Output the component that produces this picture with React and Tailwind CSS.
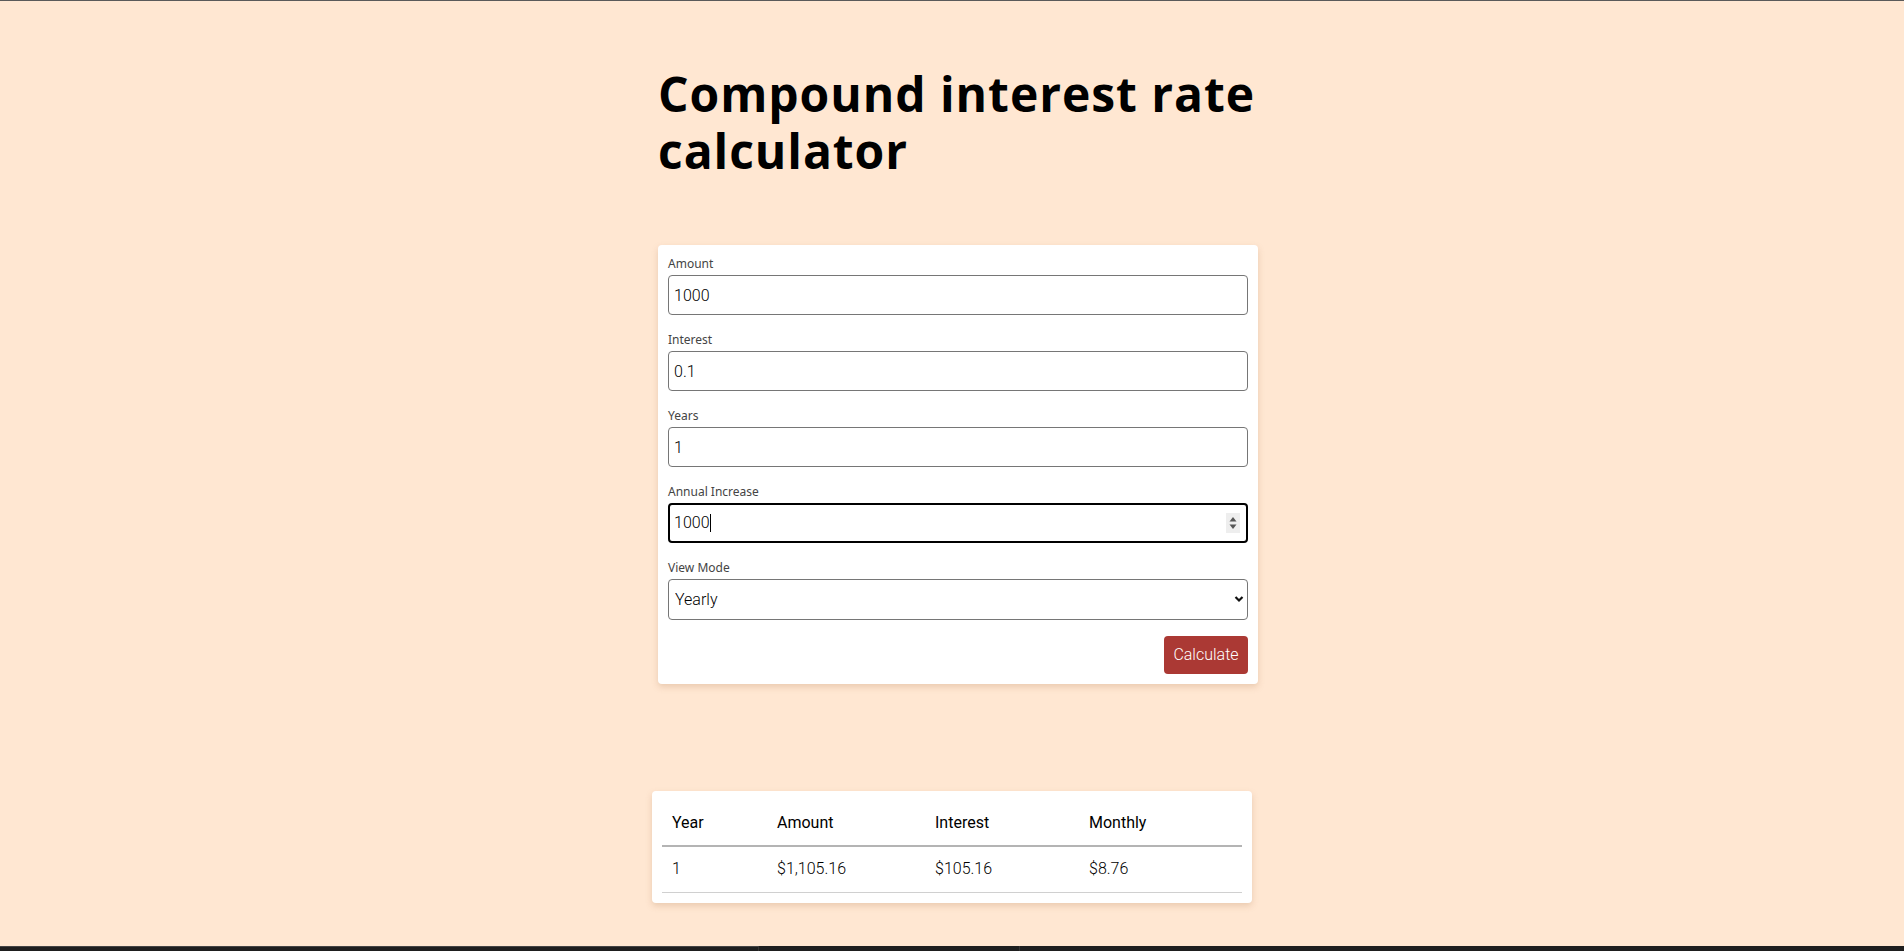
import React, { useState } from 'react';

const fieldLabel = 'block text-[12px] leading-[16px] mb-[3px] text-[#444] font-["Noto_Sans",sans-serif]';
const inputBox =
  'block w-full h-[40px] rounded-[4px] border border-[#767676] bg-white px-[5px] text-[16px] text-black font-["Roboto",sans-serif] font-light outline-none';

const Field = ({ label, children }) => (
  <div className="mb-[17px]">
    <label className={fieldLabel}>{label}</label>
    {children}
  </div>
);

const App = () => {
  const [amount, setAmount] = useState('1000');
  const [interest, setInterest] = useState('0.1');
  const [years, setYears] = useState('1');
  const [mode, setMode] = useState('Yearly');

  // Result of the last calculation
  const rows = [{ year: 1, amount: '$1,105.16', interest: '$105.16', monthly: '$8.76' }];

  return (
    <div className="h-[951px] flex flex-col bg-[#ffe7d2] border-t border-[#5a5a5a] overflow-hidden">
      <div className="flex-1 flex flex-col items-center">
        <div className="w-[600px] ml-[12px] pt-[64px]">
          <h1 className='text-[48px] leading-[57px] font-bold text-black font-["Open_Sans",sans-serif] tracking-[0.95px] whitespace-nowrap'>
            Compound interest rate
            <br />
            calculator
          </h1>

          <form
            className="mt-[66px] bg-white rounded-[4px] shadow-[0_3px_6px_rgba(170,120,80,0.25)] px-[10px] pt-[11px] pb-[10px]"
            onSubmit={(e) => e.preventDefault()}
          >
            <Field label="Amount">
              <input className={inputBox} type="number" value={amount} onChange={(e) => setAmount(e.target.value)} />
            </Field>
            <Field label="Interest">
              <input className={inputBox} type="number" value={interest} onChange={(e) => setInterest(e.target.value)} />
            </Field>
            <Field label="Years">
              <input className={inputBox} type="number" value={years} onChange={(e) => setYears(e.target.value)} />
            </Field>
            <Field label="Annual Increase">
              <div className='flex items-center w-full h-[40px] rounded-[4px] border-2 border-black bg-white pl-[4px] pr-[6px] text-[16px] text-black font-["Roboto",sans-serif] font-light'>
                <span>1000</span>
                <span className="w-px h-[18px] bg-black" />
                <span className="ml-auto flex flex-col items-center justify-center w-[14px] h-[20px] bg-[#eeeeee]">
                  <svg width="8" height="14" viewBox="0 0 8 14">
                    <path d="M4 1 L7.5 5.5 H0.5 Z" fill="#555" />
                    <path d="M4 13 L7.5 8.5 H0.5 Z" fill="#555" />
                  </svg>
                </span>
              </div>
            </Field>
            <div>
              <label className={fieldLabel}>View Mode</label>
              <div className="relative">
                <select
                  className={inputBox + ' h-[41px] appearance-none pl-[6px]'}
                  value={mode}
                  onChange={(e) => setMode(e.target.value)}
                >
                  <option>Yearly</option>
                  <option>Monthly</option>
                </select>
                <svg className="absolute right-[4px] top-[16px] pointer-events-none" width="10" height="8" viewBox="0 0 10 8">
                  <path d="M1.5 2 L5 5.5 L8.5 2" fill="none" stroke="#111" strokeWidth="2.2" />
                </svg>
              </div>
            </div>
            <div className="flex justify-end mt-[16px]">
              <button
                type="submit"
                className='h-[38px] w-[84px] rounded-[4px] bg-[#ab3934] text-white text-[16px] font-light font-["Roboto",sans-serif]'
              >
                Calculate
              </button>
            </div>
          </form>
        </div>

        <div className="w-[600px] mt-[107px] bg-white rounded-[4px] shadow-[0_3px_6px_rgba(170,120,80,0.25)] p-[10px]">
          <table className='w-full border-collapse text-left text-[16px] text-black font-["Roboto",sans-serif]'>
            <thead>
              <tr className="h-[45px] border-b-2 border-[#b4b4b4]">
                <th className="w-[105px] pl-[10px] font-normal">Year</th>
                <th className="w-[158px] pl-[10px] font-normal">Amount</th>
                <th className="w-[154px] pl-[10px] font-normal">Interest</th>
                <th className="pl-[10px] font-normal">Monthly</th>
              </tr>
            </thead>
            <tbody>
              {rows.map((r) => (
                <tr key={r.year} className="h-[46px] border-b border-[#d0d0d0]">
                  <td className="pl-[10px] font-light">{r.year}</td>
                  <td className="pl-[10px] font-light">{r.amount}</td>
                  <td className="pl-[10px] font-light">{r.interest}</td>
                  <td className="pl-[10px] font-light">{r.monthly}</td>
                </tr>
              ))}
            </tbody>
          </table>
        </div>
      </div>

      <div className="h-[5px] flex bg-[#1e1e1e]">
        <div className="w-[759px] border-t border-[#444] border-r border-r-[#333]" />
        <div className="w-[261px] border-r border-[#333]" />
        <div className="flex-1" />
      </div>
    </div>
  );
};

export default App;
